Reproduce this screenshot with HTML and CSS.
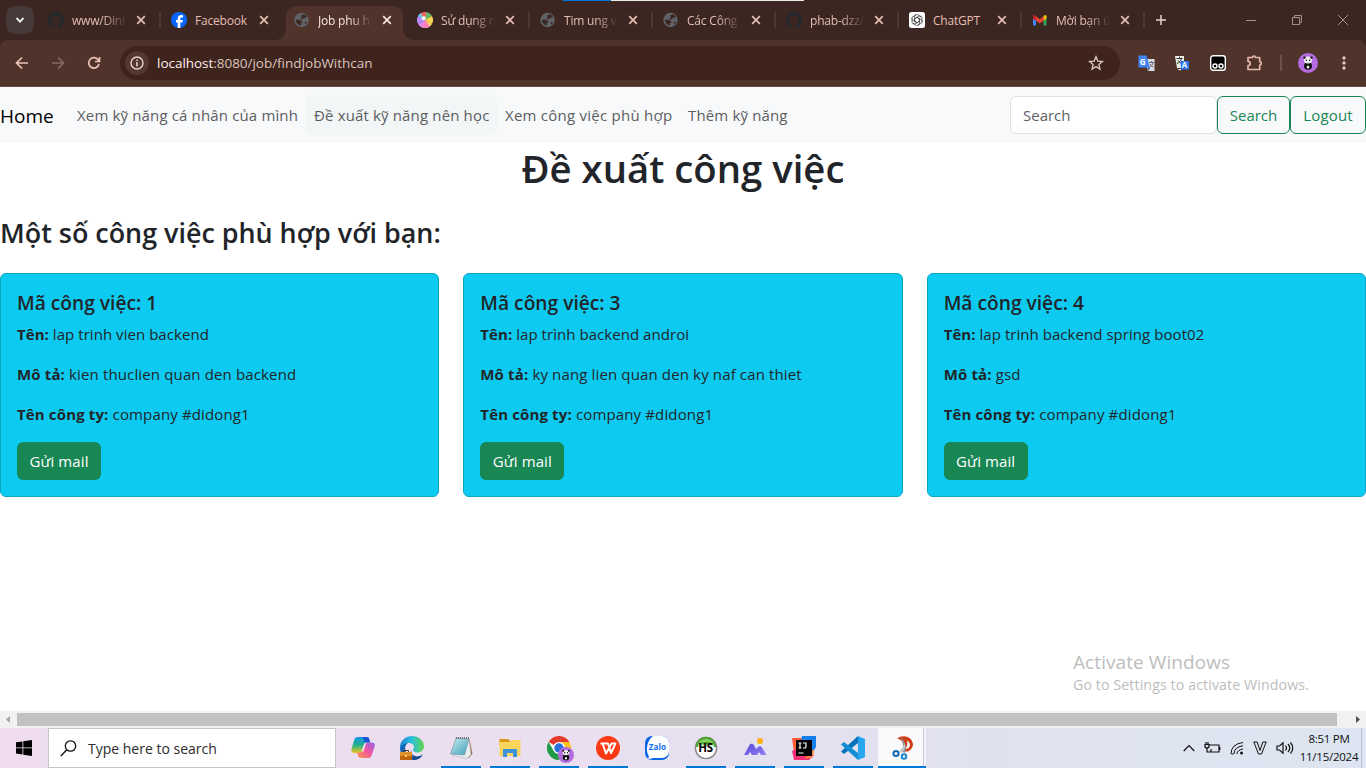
FILE: index.html
```html
<!DOCTYPE html>
<html lang="vi">
<head>
<meta charset="utf-8">
<title>Job phu hop</title>
<link rel="stylesheet" href="styles.css">
</head>
<body>
<svg class="defs" aria-hidden="true">
  <defs>
    <symbol id="close" viewBox="0 0 10 10"><path d="M1.200 1.200l7.600 7.600M8.800 1.200l-7.600 7.600" stroke="currentColor" stroke-width="1.700" fill="none"/></symbol>
    <symbol id="github" viewBox="0 0 16 16"><path fill="#24292e" d="M8 0C3.580 0 0 3.580 0 8c0 3.540 2.290 6.530 5.470 7.590.4.070.55-.17.55-.38 0-.19-.01-.82-.01-1.490-2.010.37-2.530-.49-2.690-.94-.09-.23-.48-.94-.82-1.130-.28-.15-.68-.52-.01-.53.63-.01 1.080.58 1.230.82.72 1.210 1.870.87 2.330.66.070-.52.28-.87.51-1.070-1.780-.2-3.640-.89-3.640-3.950 0-.87.31-1.590.82-2.150-.08-.2-.36-1.020.08-2.120 0 0 .67-.21 2.200.82a7.600 7.600 0 014 0c1.530-1.040 2.200-.82 2.200-.82.44 1.100.16 1.920.08 2.120.51.56.82 1.270.82 2.150 0 3.070-1.870 3.750-3.650 3.950.29.25.54.73.54 1.480 0 1.070-.01 1.930-.01 2.200 0 .21.15.46.55.38A8 8 0 008 0z"/></symbol>
    <symbol id="globe" viewBox="0 0 16 16"><circle cx="7.500" cy="8" r="7.200" fill="#5f6368"/><path d="M1.800 7.800h3.400c1.200 0 1.900.6 1.900 1.500h1.600v1.300H6.900v2.800C4 13.200 2 11 1.800 7.800zM7 3.300h1.700V2.200c2 .2 3.500 1.200 4.300 2.800h-1.700v1.200H9.700c-.7 0-1.200.6-1.200 1.200H6.700V6h1V4.600H7zM10.800 9.900h2.300c-.4 1.200-1 1.900-1.800 2.500v-1.300h-.5z" fill="#3b2621"/></symbol>
    <symbol id="panda" viewBox="0 0 20 20"><circle cx="10" cy="10" r="10" fill="#b56be0"/><ellipse cx="10" cy="13" rx="4" ry="3.800" fill="#111"/><ellipse cx="10" cy="7" rx="4.200" ry="3.400" fill="#eee"/><circle cx="6.500" cy="4.600" r="1.200" fill="#111"/><circle cx="13.500" cy="4.600" r="1.200" fill="#111"/><circle cx="8.400" cy="7.200" r=".8" fill="#111"/><circle cx="11.800" cy="7.200" r=".8" fill="#111"/><ellipse cx="10" cy="14" rx="1.300" ry="1.600" fill="#eee"/></symbol>
  </defs>
</svg>

<header class="browser">
  <div class="top-line"><i></i><b></b></div>
  <div class="tabs">
    <div class="tab-search"><svg width="10" height="10" viewBox="0 0 10 10"><path d="M1.500 3l3.500 3.600L8.500 3" fill="none" stroke="#eee" stroke-width="1.800"/></svg></div>
    <div class="tab sep"><svg class="fav"><use href="#github"/></svg><span class="label fade">www/Dinh</span><svg class="x"><use href="#close"/></svg></div>
    <div class="tab"><svg class="fav" viewBox="0 0 16 16"><circle cx="8" cy="8" r="8" fill="#0866ff"/><path fill="#fff" d="M6.700 16v-5.500H5V8h1.700V6.900c0-2.700 1.200-3.900 3.800-3.900.5 0 1.100.1 1.500.2v2.200h-1c-1.300 0-1.700.5-1.700 1.600v1h2.600l-.5 2.500H9.300V16z"/></svg><span class="label">Facebook</span><svg class="x"><use href="#close"/></svg></div>
    <div class="tab active"><svg class="fav"><use href="#globe"/></svg><span class="label fade">Job phu h</span><svg class="x"><use href="#close"/></svg></div>
    <div class="tab sep"><svg class="fav" viewBox="0 0 16 16"><path d="M8 8L8 0A8 8 0 0 1 14.900 4z" fill="#63b76a"/><path d="M8 8l6.900-4a8 8 0 0 1 0 8z" fill="#ffd54f"/><path d="M8 8l6.900 4A8 8 0 0 1 8 16z" fill="#ffdf62"/><path d="M8 8v8a8 8 0 0 1-6.900-4z" fill="#e08af0"/><path d="M8 8l-6.900 4a8 8 0 0 1 0-8z" fill="#b58cff"/><path d="M8 8L1.100 4A8 8 0 0 1 4 1z" fill="#69d8f5"/><path d="M8 8L3.500 1.400A8 8 0 0 1 9.500.100z" fill="#f26767"/><path d="M8 8l5 6.200A8 8 0 0 1 5 15.400z" fill="#ff80c0"/><circle cx="6.700" cy="6.300" r="2" fill="#fff"/></svg><span class="label fade">Sử dụng n</span><svg class="x"><use href="#close"/></svg></div>
    <div class="tab sep"><svg class="fav"><use href="#globe"/></svg><span class="label fade">Tim ung v</span><svg class="x"><use href="#close"/></svg></div>
    <div class="tab sep"><svg class="fav"><use href="#globe"/></svg><span class="label fade">Các Công</span><svg class="x"><use href="#close"/></svg></div>
    <div class="tab sep"><svg class="fav"><use href="#github"/></svg><span class="label fade">phab-dzz/</span><svg class="x"><use href="#close"/></svg></div>
    <div class="tab sep"><svg class="fav" viewBox="0 0 16 16"><rect width="16" height="16" rx="2.500" fill="#fff"/><g fill="none" stroke="#333" stroke-width=".7"><path id="p" d="M8 5.200L5.500 6.700V4.800A2.400 2.400 0 0 1 9.900 3.500L12 4.800"/><use href="#p" transform="rotate(60 8 8)"/><use href="#p" transform="rotate(120 8 8)"/><use href="#p" transform="rotate(180 8 8)"/><use href="#p" transform="rotate(240 8 8)"/><use href="#p" transform="rotate(300 8 8)"/><path d="M8 5.400l2.300 1.300v2.600L8 10.600 5.700 9.300V6.700z"/></g></svg><span class="label">ChatGPT</span><svg class="x"><use href="#close"/></svg></div>
    <div class="tab sep"><svg class="fav" viewBox="0 0 16 16"><path d="M1 4h3v9.500H2a1 1 0 0 1-1-1z" fill="#4285f4"/><path d="M11.500 4h3v8.500a1 1 0 0 1-1 1h-2z" fill="#34a853"/><path d="M11.500 4.500l1-1.200c1-.8 2-.1 2 1v2.200l-3 2.300z" fill="#fbbc04"/><path d="M4 4.500L2.800 3.200C1.900 2.600 1 3.200 1 4.200v2.300l3 2.300z" fill="#c5221f"/><path d="M4 4.300l3.800 2.900 3.700-2.900v4.500L7.800 11.600 4 8.800z" fill="#ea4335"/></svg><span class="label fade">Mời bạn ú</span><svg class="x"><use href="#close"/></svg></div>
    <svg class="plus" viewBox="0 0 12 12"><path d="M6 1v10M1 6h10" stroke="#e6d3ce" stroke-width="1.500"/></svg>
    <div class="window-buttons">
      <svg viewBox="0 0 12 12"><path d="M1 6.500h10"/></svg>
      <svg viewBox="0 0 12 12"><path d="M1.500 3.500h7v7h-7zM3.500 3.500v-2h7v7h-2"/></svg>
      <svg viewBox="0 0 12 12"><path d="M1 1l10 10M11 1L1 11"/></svg>
    </div>
  </div>
  <div class="toolbar">
    <svg class="nav" viewBox="0 0 16 16"><path d="M14 8H3M8 2.500L2.500 8 8 13.500"/></svg>
    <svg class="nav off" viewBox="0 0 16 16"><path d="M2 8h11M8 2.500L13.500 8 8 13.500"/></svg>
    <svg class="nav" viewBox="0 0 16 16"><path d="M13 9A5.200 5.200 0 1 1 11.700 4.300L13.300 6M13.500 2v4.500H9"/></svg>
    <div class="address">
      <span class="info"><svg width="14" height="14" viewBox="0 0 14 14"><circle cx="7" cy="7" r="6" fill="none" stroke="#e8d5d0" stroke-width="1.400"/><path d="M7 6v4.500M7 3.500v1.400" stroke="#e8d5d0" stroke-width="1.500"/></svg></span>
      <span class="url"><b>localhost</b>:8080/job/findJobWithcan</span>
      <svg class="star" viewBox="0 0 16 16"><path d="M8 1.800l1.800 4.300 4.700.4-3.600 3 1.100 4.600L8 11.600l-4 2.500 1.100-4.600-3.600-3 4.700-.4z" fill="none" stroke="#dfc9c4" stroke-width="1.300"/></svg>
    </div>
    <div class="extensions">
      <svg class="gt" width="17" height="17" viewBox="0 0 17 17"><path d="M7 4h9.500v12H10z" fill="#dadce0"/><path d="M11 7.500h5M13.500 6v1.500M15 7.500c-.5 2.500-2 4-3.500 5M12 9c.8 1.500 2 2.500 3.500 3.200" stroke="#667" fill="none"/><path d="M.5.500h8l3.500 12H.5z" fill="#4385f5"/><path d="M10 12.500h2L10.500 16z" fill="#174ea6"/><text x="1.800" y="9.500" class="g-letter">G</text></svg>
      <svg class="tr" width="16" height="16" viewBox="0 0 16 16"><path d="M1 1h9v12H3z" fill="#e8eee4"/><path d="M2.500 3.500h6M5.500 1.800v1.700M7.500 3.500c-.6 2.500-2 4-4.500 5M4 5.500c1 1.500 2 2.300 4 3" stroke="#333" fill="none"/><path d="M6.500 6H15v8.500H7z" fill="#2874ed"/><path d="M3 14h4v1.500z" fill="#fff"/><text x="7.800" y="13.200" class="a-letter">A</text></svg>
      <svg class="tm" width="16" height="16" viewBox="0 0 16 16"><rect x=".7" y=".7" width="14.600" height="14.600" rx="2.500" fill="#000" stroke="#fff" stroke-width="1.400"/><circle cx="5" cy="11" r="2" fill="#000" stroke="#fff" stroke-width="1.400"/><circle cx="11" cy="11" r="2" fill="#000" stroke="#fff" stroke-width="1.400"/></svg>
      <svg class="pz" width="18" height="18" viewBox="0 0 18 18"><path d="M2 3.500h4.500a1.500 1.500 0 0 1 3 0h4.200v4.300a1.600 1.600 0 0 1 0 3.200v4.500H2v-3.800a2.200 2.200 0 0 0 0-4.400z" fill="none" stroke="#e5b6aa" stroke-width="1.700" stroke-linejoin="round"/></svg>
      <i class="bar"></i>
      <svg class="pf" width="20" height="20"><use href="#panda"/></svg>
      <svg width="4" height="16" viewBox="0 0 4 16"><g fill="#eac4ba"><circle cx="2" cy="3" r="1.700"/><circle cx="2" cy="8" r="1.700"/><circle cx="2" cy="13" r="1.700"/></g></svg>
    </div>
  </div>
</header>

<div class="page">
  <nav class="navbar">
    <a class="brand">Home</a>
    <a class="link l1">Xem kỹ năng cá nhân của mình</a>
    <a class="link l2 hover">Đề xuất kỹ năng nên học</a>
    <a class="link l3">Xem công việc phù hợp</a>
    <a class="link l4">Thêm kỹ năng</a>
    <form class="search"><span class="field">Search</span><button type="button" class="btn outline b1">Search</button><button type="button" class="btn outline b2">Logout</button></form>
  </nav>
  <main>
    <h1>Đề xuất công việc</h1>
    <h2>Một số công việc phù hợp với bạn:</h2>
    <div class="cards">
      <article class="card"><h5>Mã công việc: 1</h5><p class="name"><b>Tên:</b> lap trinh vien backend</p><p><b>Mô tả:</b> kien thuclien quan den backend</p><p><b>Tên công ty:</b> company #didong1</p><button type="button" class="btn green">Gửi mail</button></article>
      <article class="card"><h5>Mã công việc: 3</h5><p class="name"><b>Tên:</b> lap trình backend androi</p><p><b>Mô tả:</b> ky nang lien quan den ky naf can thiet</p><p><b>Tên công ty:</b> company #didong1</p><button type="button" class="btn green">Gửi mail</button></article>
      <article class="card"><h5>Mã công việc: 4</h5><p class="name"><b>Tên:</b> lap trinh backend spring boot02</p><p><b>Mô tả:</b> gsd</p><p><b>Tên công ty:</b> company #didong1</p><button type="button" class="btn green">Gửi mail</button></article>
    </div>
  </main>
  <div class="watermark"><div class="w1">Activate Windows</div><div class="w2">Go to Settings to activate Windows.</div></div>
</div>

<div class="scrollbar"><svg width="17" height="17"><path d="M10 5v7L6 8.500z" fill="#a3a3a3"/></svg><div class="thumb"></div><svg width="29" height="17"><path d="M19 5v7l4-3.500z" fill="#505050"/></svg></div>

<footer class="taskbar">
  <div class="start"><svg width="16" height="16" viewBox="0 0 16 16"><path d="M0 2.300L6.500 1.400v6.100H0zM7.300 1.300L16 0v7.500H7.300zM0 8.300h6.500v6.200L0 13.600zM7.300 8.300H16V16l-8.700-1.300z"/></svg></div>
  <div class="find"><svg width="17" height="17" viewBox="0 0 17 17"><circle cx="10.500" cy="6" r="5.200" fill="none" stroke="#111" stroke-width="1.300"/><path d="M6.800 9.800L.8 16" stroke="#111" stroke-width="1.400"/></svg><span>Type here to search</span></div>
  <div class="apps">
    <div class="app"><svg viewBox="0 0 24 24"><defs><linearGradient id="c1" x2="0" y2="1"><stop stop-color="#1595e8"/><stop offset=".5" stop-color="#20b28c"/><stop offset="1" stop-color="#f2c81c"/></linearGradient><linearGradient id="c2" x1="1" x2="0" y2="1"><stop stop-color="#9563f0"/><stop offset=".5" stop-color="#f0579c"/><stop offset="1" stop-color="#ff9a4c"/></linearGradient></defs><path d="M6.500 1h9c2 0 2.500 1 3 3l.7 2.500h-3c-2 0-2.700 1-3.200 2.700L11 15c-.4 1.500-1.200 2-2.500 2H3.500C.8 17 0 15.200.5 13L3.200 4C3.800 2 4.700 1 6.500 1z" fill="url(#c1)"/><path d="M11 1h4.500c2 0 2.500 1 3 3l.7 2.500h-4c-2-.2-2.200-2-2.700-3.500-.3-1-.8-1.700-1.500-2z" fill="#2054d6"/><path d="M17.500 22H10c-2 0-2.600-1-3.200-3L6 16.500h3c2 0 2.900-.8 3.400-2.500L14 8.600c.4-1.300 1.200-2 2.500-2H21c2.500 0 3.300 1.700 2.600 4L20.800 19c-.6 2-1.400 3-3.300 3z" fill="url(#c2)"/><path d="M12.700 9L11 14.800l1.500.4L14.400 9q.4-1.500 1.600-2.300-2.500 0-3.300 2.300z" fill="#f6e9f8"/></svg></div>
    <div class="app"><svg viewBox="0 0 24 24"><defs><linearGradient id="e1" x2="1"><stop stop-color="#1986d8"/><stop offset=".5" stop-color="#2bc0dc"/><stop offset="1" stop-color="#65d64b"/></linearGradient></defs><path d="M0 10C1 4 6 0 12 0c7 0 12 5 12 10 0 4-3 6.500-6.500 6.500-3 0-4.500-1-4.500-2.500 0-1 1-1.500 1-3 0-2-2-4-5.500-4C4.500 7 1 9 0 12z" fill="url(#e1)"/><path d="M0 12c1-4 5-5 8-5-3 2-3.500 5-2 9 1.500 4 6 6 10 5 3-.5 5-1.500 6.500-3-2 4-6 6-10.500 6C5 24 0 19 0 12z" fill="#1267b8"/><path d="M11 14c-1 4 3 6.500 7 6.500 2.500 0 4-1 5-2-2 3.700-5.500 5.500-10 5.500z" fill="#134a8d"/><path d="M0 16h12v8H0z" fill="#bd650f"/><path d="M0 16h12v4H0z" fill="#e0912a"/><path d="M3.500 16v-1.500h5V16" fill="none" stroke="#64320f"/><path d="M5 19h2v2H5z" fill="#ffd44e"/></svg></div>
    <div class="app on"><svg viewBox="0 0 24 24"><defs><linearGradient id="n1" x2="1" y2="1"><stop stop-color="#c8eef3"/><stop offset="1" stop-color="#3f9db8"/></linearGradient></defs><path d="M20.500 3l3 15-4 4-4-3z" fill="#9b7349"/><path d="M20 2.500l2 16-4 4-14-3z" fill="#e9edf0" stroke="#a0a8ae" stroke-width=".5"/><path d="M7 2l13 1-4.500 16L1.500 18z" fill="url(#n1)" stroke="#70909b" stroke-width=".6"/><path d="M7 2h13" stroke="#555" stroke-width="1.600" stroke-dasharray="1 1"/></svg></div>
    <div class="app on"><svg viewBox="0 0 24 24"><path d="M1.500 3h9l2 3v3h-11z" fill="#d89a13"/><path d="M1.500 6H12l1.500-2h9v16h-21z" fill="#ffd45a"/><path d="M5 21v-8h14v8h-4v-4H9v4z" fill="#3c92dc"/></svg></div>
    <div class="app on"><svg class="chrome" viewBox="0 0 27 27"><circle cx="12" cy="12" r="12" fill="#fff"/><path d="M12 12L1.600 6A12 12 0 0 1 22.400 6z" fill="#e33b2e"/><path d="M12 6h10.400A12 12 0 0 1 12 24l5.200-9z" fill="#fcc31e"/><path d="M1.600 6A12 12 0 0 0 12 24l5.200-9H6.800z" fill="#249b4a"/><circle cx="12" cy="12" r="6" fill="#fff"/><circle cx="12" cy="12" r="4.700" fill="#2a70df"/><svg x="11" y="11" width="16" height="16"><use href="#panda"/></svg></svg></div>
    <div class="app on"><svg viewBox="0 0 24 24"><circle cx="12" cy="12" r="12" fill="#fb3a15"/><path d="M4.500 7.500h7.500l3 9.500L19.500 7.500h-4L10 17.500 6.500 7.500" fill="none" stroke="#fff" stroke-width="2" stroke-linejoin="round"/></svg></div>
    <div class="app"><svg viewBox="0 0 24 24"><rect width="24" height="24" rx="7" fill="#0b66e8"/><path d="M8 0h9a7 7 0 0 1 7 7v8a7 7 0 0 1-7 7H8c-2 1-4 1-5 .5 1-1 1-2 .5-3C1 16 1 5 8 0z" fill="#fff"/><text x="3.800" y="14" class="zalo">Zalo</text></svg></div>
    <div class="app on"><svg viewBox="0 0 24 24"><circle cx="12" cy="12" r="10.600" fill="#fff" stroke="#858585" stroke-width="1.400"/><path d="M1.800 11a10.200 10.200 0 0 1 20.400 0z" fill="#48a52b"/><path d="M4 7.500C7 1.500 17 1.500 20 7.500 15 5.500 9 5.500 4 7.500z" fill="#83cd62"/><path d="M4 8.500h16v8H4z" fill="#fff" opacity=".75"/><text x="4.300" y="16.200" class="hs">HS</text></svg></div>
    <div class="app on"><svg viewBox="0 0 24 24"><defs><linearGradient id="m1" x2="1" y2="1"><stop stop-color="#5546d8"/><stop offset="1" stop-color="#9381f5"/></linearGradient></defs><circle cx="17" cy="5" r="3" fill="#ffae0b"/><path d="M1 19L6.500 9c1-1.800 3.300-1.800 4.300 0l2.200 4 2-2c1.500-1.300 3-1 4 .6L23.500 19H18l-2-3-2 3H9l-2-3-2 3z" fill="url(#m1)"/></svg></div>
    <div class="app on"><svg viewBox="0 0 24 24"><path d="M0 2h13v20L3 24z" fill="#ff5b3b"/><path d="M10 0h14v11l-3 5H7z" fill="#167fef"/><path d="M0 15l9-3 13 7-5 5H2z" fill="#f52f75"/><path d="M18 14h4l-1 7-8 2z" fill="#ff8540"/><path d="M4 4h16v16H4z" fill="#000"/><path d="M6.500 7h3M8 7v5M6.500 12h3M11 7h3v4q0 1-1.500 1H11M6.500 17h5" fill="none" stroke="#fff" stroke-width="1.200"/></svg></div>
    <div class="app on"><svg viewBox="0 0 24 24"><path d="M17 0l7 3v18l-7 3z" fill="#27a5ee"/><path d="M17 0v7L3 18 0 15.500z" fill="#0872b9"/><path d="M17 24v-7L3 6 0 8.500z" fill="#138ed5"/></svg></div>
    <div class="app on current"><svg viewBox="0 0 24 24"><path d="M5 2.500Q9-.5 14 .5q6 1.500 7 7.500 0 5-5 7.500H9Q14 12 11 7 9 3 5 2.500z" fill="#cf3f13"/><path d="M15 4.500q4 2 2.500 6.500-1.500 2-4 2 2.500-4 1.500-8.500z" fill="#fafafd"/><path d="M9 1q6 6 4.500 15l-2 1.500Q11.500 8 9 1z" fill="#8e959b"/><path d="M12.500 7q2.500 5-3.500 10l-2-2q5-4 5.500-8z" fill="#c3c8cc"/><circle cx="4" cy="17.500" r="2.600" fill="none" stroke="#1467ae" stroke-width="2"/><circle cx="12" cy="20.500" r="2.300" fill="none" stroke="#1d85d0" stroke-width="2"/></svg></div>
  </div>
  <div class="tray">
    <svg width="12" height="8" viewBox="0 0 12 8"><path d="M.7 7L6 1.500 11.300 7"/></svg>
    <svg width="17" height="14" viewBox="0 0 17 14"><path d="M5.500 4H15v7H7V8M15.800 6v3M1 3.500h4v2.500Q3 8 1 6zM2 1v2.500M4 1v2.500M3 7v4h4"/></svg>
    <svg width="14" height="14" viewBox="0 0 14 14"><path d="M1 13Q1 3 13 1.500M4 13Q4 6 13 4.800M7 13Q7 9 13 8M1.500 13h2" stroke-width="1"/><circle cx="11.500" cy="12" r="1.500" fill="#111" stroke="none"/></svg>
    <svg width="14" height="14" viewBox="0 0 14 14"><path d="M.8 1h3.400L7 9.500 9.800 1h3.400L8.500 13h-3z" stroke-width="1"/></svg>
    <svg width="18" height="14" viewBox="0 0 18 14"><path d="M1 5h2.500L7 1.800v10.400L3.500 9H1zM9.500 4.500q2 2.500 0 5M12 3q3.500 4 0 8M14.500 1.500q4.500 5.500 0 11"/></svg>
    <div class="clock"><span>8:51 PM</span><span>11/15/2024</span></div>
    <i class="desk"></i>
  </div>
</footer>
</body>
</html>
```

FILE: styles.css
```css
* { box-sizing: border-box; }
body { margin: 0; width: 1366px; height: 768px; overflow: hidden; display: flex; flex-direction: column; font-family: "Open Sans", "Noto Sans", sans-serif; font-size: 15px; color: #212529; background: #fff; }
svg { display: block; flex: none; }
.defs { position: absolute; width: 0; height: 0; }

.browser { height: 87px; background: #3b2621; position: relative; flex: none; }
.top-line { position: absolute; top: 0; left: 563px; display: flex; height: 1px; }
.top-line i { width: 48px; background: #0078d7; }
.top-line b { width: 193px; background: #e8e8e8; }
.tabs { display: flex; height: 40px; align-items: center; padding-left: 6px; }
.tab-search { width: 28px; height: 28px; border-radius: 9px; background: #473a38; display: grid; place-items: center; margin-right: 3px; }
.tab { width: 123px; height: 34px; margin-top: 6px; display: flex; align-items: center; padding: 0 14px 6px 11px; color: #e5beb4; position: relative; }
.tab.sep::after { content: ""; position: absolute; right: -1px; top: 6px; width: 2px; height: 16px; background: #4a3936; }
.fav { width: 16px; height: 16px; margin-right: 8px; }
.label { width: 56px; font-size: 12px; letter-spacing: -.2px; white-space: nowrap; line-height: 18px; padding-top: 1px; }
.fade { mask-image: linear-gradient(90deg, #000 55%, transparent 98%); }
.x { width: 10px; height: 10px; margin-left: 8px; }
.tab.active { color: #f8e5e0; }
.tab.active::before { content: ""; position: absolute; left: 3px; right: 3px; top: 0; bottom: 0; background: #50342c; border-radius: 10px 10px 0 0; }
.tab.active::after { content: ""; position: absolute; left: -7px; right: -7px; bottom: 0; height: 10px; background: radial-gradient(circle at 0 0, transparent 9.500px, #50342c 10px) left / 10px 10px no-repeat, radial-gradient(circle at 100% 0, transparent 9.500px, #50342c 10px) right / 10px 10px no-repeat; }
.tab.active > * { z-index: 1; }
.plus { width: 12px; height: 12px; margin-left: 11px; }
.window-buttons { display: flex; gap: 34px; margin-left: auto; padding-right: 17px; }
.window-buttons svg { width: 12px; height: 12px; fill: none; stroke: #a3918c; }
.toolbar { height: 47px; background: #50342c; border-radius: 8px 8px 0 0; display: flex; align-items: center; padding-left: 14px; border-bottom: 1px solid #674c44; }
.nav { width: 16px; height: 16px; margin-right: 20px; fill: none; stroke: #efc3b8; stroke-width: 1.700; }
.nav.off { stroke: #896a62; }
.address { width: 1000px; height: 34px; border-radius: 17px; background: #3f231d; display: flex; align-items: center; padding: 0 16px 0 5px; margin-left: -2px; }
.info { width: 24px; height: 24px; border-radius: 50%; background: #54372f; display: grid; place-items: center; margin-right: 8px; }
.url { font-size: 13.500px; color: #d9c3bd; letter-spacing: -.03px; }
.url b { font-weight: 400; color: #fff0ec; }
.star { width: 16px; height: 16px; margin-left: auto; }
.extensions { display: flex; align-items: center; padding-left: 18px; }
.gt { margin-right: 19px; }
.tr { margin-right: 20px; }
.tm { margin-right: 20px; }
.pz { margin-right: 16px; }
.bar { width: 2px; height: 16px; background: #704f46; margin-right: 16px; }
.pf { margin-right: 24px; }
.g-letter { font: bold 8px "Open Sans"; fill: #fff; }
.a-letter { font: bold 8px "Open Sans"; fill: #fff; }

.page { height: 624px; position: relative; flex: none; }
.navbar { height: 56px; background: #f8f9fb; display: flex; align-items: center; }
.brand { width: 69px; font-size: 19px; color: #000; padding-top: 1px; }
.link { height: 40px; line-height: 40px; padding: 0 8px; color: #5c5d5f; white-space: nowrap; border-radius: 6px; letter-spacing: .15px; }
.hover { background: #f2f6f7; }
.l1 { width: 237px; }
.l2 { width: 191px; }
.l3 { width: 183px; letter-spacing: .25px; }
.search { display: flex; margin-left: auto; }
.field { width: 207px; height: 38px; border: 1px solid #dee2e6; border-radius: 6px; background: #fff; padding: 0 12px; line-height: 37px; color: #5d6166; }
.btn { font: 15px "Open Sans", "Noto Sans", sans-serif; height: 38px; border-radius: 6px; padding: 0; }
.outline { border: 1px solid #198754; color: #198754; background: transparent; }
.b1 { width: 73px; }
.b2 { width: 76px; letter-spacing: .15px; }
h1, h2, h5, p { margin: 0; }
h1 { font-size: 38.300px; font-weight: 600; line-height: 50px; height: 52px; text-align: center; }
h2 { font-size: 26.900px; font-weight: 600; line-height: 34px; margin-top: 21px; }
.cards { display: grid; grid-template-columns: repeat(3, 1fr); gap: 24px; margin-top: 23px; }
.card { height: 224px; border: 1px solid #0ca6c3; border-radius: 6px; background: #0dcaf0; padding: 16px; }
h5 { font-size: 19.200px; font-weight: 600; line-height: 25px; margin-bottom: 7px; }
.card p { line-height: 24px; margin-bottom: 16px; white-space: nowrap; letter-spacing: .14px; }
.card .name { letter-spacing: .05px; }
.green { width: 84px; border: 0; background: #198754; color: #fff; display: block; letter-spacing: .1px; }
.watermark { position: absolute; left: 1073px; top: 562px; color: #bdbdbd; white-space: nowrap; }
.w1 { font-size: 19px; line-height: 26px; letter-spacing: .08px; }
.w2 { font-size: 14.200px; line-height: 20px; letter-spacing: .1px; }

.scrollbar { height: 17px; background: #f1f1f1; display: flex; flex: none; }
.thumb { flex: 1; margin: 2px 0; background: #c1c1c1; }
.taskbar { height: 40px; flex: none; display: flex; background: linear-gradient(90deg, #efdcf0, #eadff0 40%, #e2e1ef 65%, #dce5f1); }
.start { width: 48px; display: grid; place-items: center; }
.find { width: 288px; background: #fff; border: 1px solid #c6c6c6; display: flex; align-items: center; padding-left: 11px; gap: 11px; font-size: 14px; color: #2b2b2b; }
.apps { display: flex; margin-left: 2px; }
.app { width: 49px; display: grid; place-items: center; position: relative; }
.app svg { width: 24px; height: 24px; }
.app .chrome { width: 27px; height: 27px; margin: 2px 0 0 3px; }
.app .chrome svg { width: 16px; height: 16px; }
.app.on::after { content: ""; position: absolute; left: 5px; width: 40px; bottom: 0; height: 2px; background: #0078d7; }
.app.current { background: linear-gradient(90deg, transparent 1px, #fafafd 1px 46px, #c9c9da 46px 47px, #f4f3fa 47px); }
.app.current svg { margin-left: 4px; }
.app.current::after { left: 1px; width: 48px; }
.zalo { font: bold 8.200px "Open Sans"; fill: #1571ef; }
.hs { font: bold 11.500px "Open Sans"; letter-spacing: -.3px; }
.tray { display: flex; align-items: center; margin-left: auto; }
.tray svg { fill: none; stroke: #111; stroke-width: 1.200; margin-right: 9px; }
.clock { width: 60px; font-size: 11.500px; letter-spacing: -.25px; line-height: 18px; display: flex; flex-direction: column; align-items: center; color: #111; margin: 0 2px 0 -4px; white-space: nowrap; }
.desk { width: 5px; height: 40px; border-left: 1px solid #b9bfca; }
```
